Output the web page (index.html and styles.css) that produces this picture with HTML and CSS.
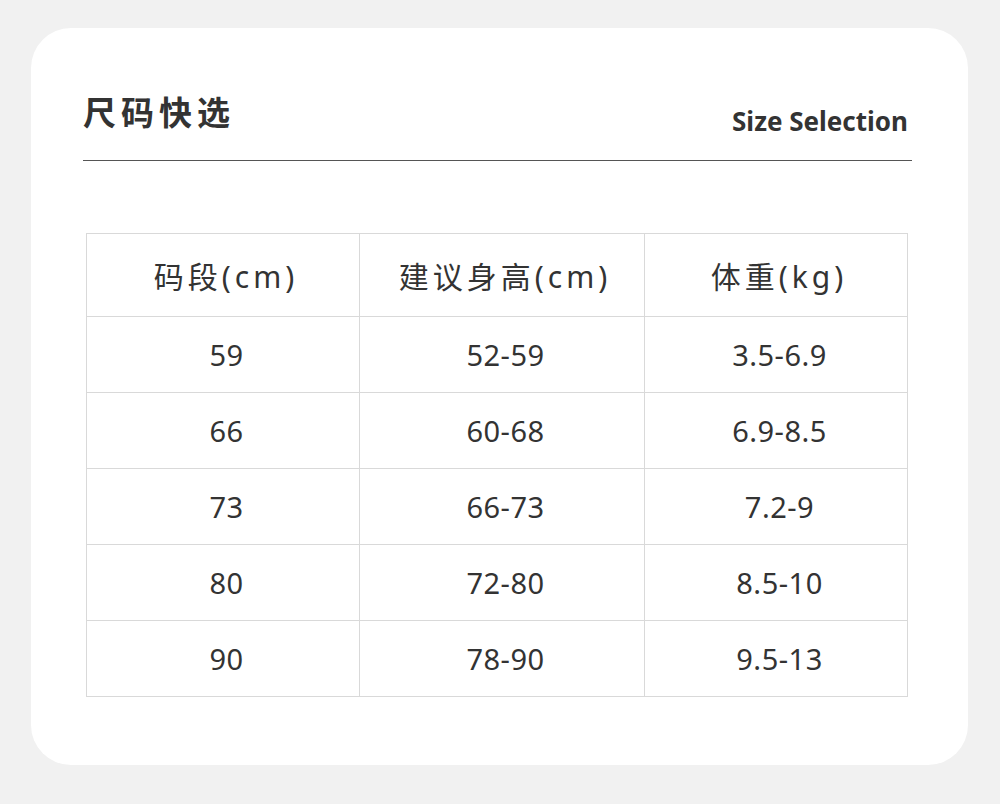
FILE: index.html
```html
<!DOCTYPE html>
<html lang="zh-CN">
<head>
<meta charset="utf-8">
<title>尺码快选</title>
<link rel="stylesheet" href="styles.css">
</head>
<body>
<div class="card">
  <div class="head">
    <h1 class="title">尺码快选</h1>
    <div class="subtitle">Size Selection</div>
  </div>
  <table class="sizes">
    <colgroup>
      <col class="c1"><col class="c2"><col class="c3">
    </colgroup>
    <thead>
      <tr><th>码段(cm)</th><th>建议身高(cm)</th><th>体重(kg)</th></tr>
    </thead>
    <tbody>
      <tr><td>59</td><td>52-59</td><td>3.5-6.9</td></tr>
      <tr><td>66</td><td>60-68</td><td>6.9-8.5</td></tr>
      <tr><td>73</td><td>66-73</td><td>7.2-9</td></tr>
      <tr><td>80</td><td>72-80</td><td>8.5-10</td></tr>
      <tr><td>90</td><td>78-90</td><td>9.5-13</td></tr>
    </tbody>
  </table>
</div>
</body>
</html>
```
FILE: styles.css
```css
html, body {
  margin: 0;
  padding: 0;
}
body {
  background: #f1f1f1;
  font-family: "Noto Sans", "Noto Sans CJK SC", sans-serif;
  color: #333;
  padding: 28px 32px 39px 31px;
}
.card {
  background: #fff;
  border-radius: 40px;
  height: 737px;
  box-sizing: border-box;
  padding: 0 56px 0 52px;
}
.head {
  display: flex;
  justify-content: space-between;
  align-items: flex-end;
  padding-top: 61px;
  padding-bottom: 27px;
  border-bottom: 1.5px solid #555;
}
.title {
  margin: 0;
  font-family: "Noto Sans CJK SC", sans-serif;
  font-size: 33px;
  font-weight: 700;
  letter-spacing: 5px;
  line-height: 44px;
  color: #333;
}
.subtitle {
  font-family: "Noto Sans", sans-serif;
  font-weight: 700;
  font-size: 26px;
  line-height: 34px;
  margin-right: 4px;
  margin-bottom: -5px;
  color: #333;
}
.sizes {
  margin: 72px 5px 0 3px;
  border-collapse: collapse;
  width: 822px;
  table-layout: fixed;
}
.c1 { width: 273px; }
.c2 { width: 285px; }
.c3 { width: 263px; }
.sizes th, .sizes td {
  border: 1px solid #d9d9d9;
  text-align: center;
  padding: 0;
  color: #333;
}
.sizes th {
  height: 82px;
  font-weight: 400;
  font-size: 30px;
  letter-spacing: 4px;
  padding-left: 6px;
  font-family: "Noto Sans", "Noto Sans CJK SC", sans-serif;
}
.sizes td {
  height: 75px;
  font-size: 29px;
  font-weight: 400;
  letter-spacing: 0.5px;
  padding-left: 7px;
}
```
